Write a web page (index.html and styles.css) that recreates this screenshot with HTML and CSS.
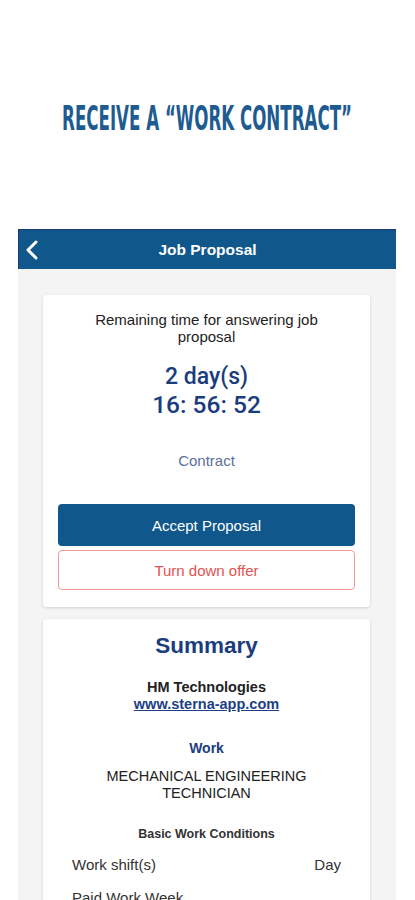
FILE: index.html
```html
<!DOCTYPE html>
<html lang="en">
<head>
    <meta charset="UTF-8">
    <meta name="viewport" content="width=device-width, initial-scale=1.0">
    <title>Job Proposal</title>
    <link rel="stylesheet" href="styles.css">
</head>
<body>
    <header class="promo">
        <h1 class="promo-title">RECEIVE A “WORK CONTRACT”</h1>
    </header>

    <div class="phone">
        <nav class="navbar">
            <svg class="back" width="14" height="20" viewBox="0 0 14 20">
                <path d="M11 2 L3 10 L11 18" fill="none" stroke="#fff" stroke-width="3" stroke-linecap="round" stroke-linejoin="round"/>
            </svg>
            <span class="nav-title">Job Proposal</span>
        </nav>

        <main class="content">
            <section class="card timer-card">
                <p class="timer-label">Remaining time for answering job proposal</p>
                <p class="timer-days">2 day(s)</p>
                <p class="timer-clock">16: 56: 52</p>
                <p class="contract-link">Contract</p>
                <button class="btn btn-accept">Accept Proposal</button>
                <button class="btn btn-decline">Turn down offer</button>
            </section>

            <section class="card summary-card">
                <h2 class="summary-title">Summary</h2>
                <p class="company">HM Technologies</p>
                <a class="company-url" href="#">www.sterna-app.com</a>
                <h3 class="section-label">Work</h3>
                <p class="job-title">MECHANICAL ENGINEERING TECHNICIAN</p>
                <h4 class="conditions-label">Basic Work Conditions</h4>
                <div class="row">
                    <span>Work shift(s)</span>
                    <span>Day</span>
                </div>
                <div class="row">
                    <span>Paid Work Week</span>
                    <span></span>
                </div>
            </section>
        </main>
    </div>
</body>
</html>
```

FILE: styles.css
```css
body {
    margin: 0;
    font-family: "Liberation Sans", Arial, sans-serif;
    background: #fff;
    color: #222;
    height: 900px;
    overflow: hidden;
}
p, h1, h2, h3, h4 {
    margin: 0;
}
.promo {
    height: 229px;
    display: flex;
    justify-content: center;
    padding-top: 99px;
    box-sizing: border-box;
}
.promo-title {
    font-family: "DejaVu Sans Condensed", "DejaVu Sans", sans-serif;
    font-weight: bold;
    font-size: 34px;
    line-height: 38px;
    color: #1d5b91;
    white-space: nowrap;
    transform: scaleX(0.545);
    height: 38px;
}
.phone {
    margin: 0 19px 0 18px;
    background: #f4f4f4;
    min-height: 700px;
}
.navbar {
    height: 40px;
    background: #10578c;
    border-top: 1px solid #1b3a75;
    border-left: 1px solid #1b3a75;
    box-sizing: border-box;
    display: flex;
    align-items: center;
    justify-content: center;
    position: relative;
}
.back {
    position: absolute;
    left: 6px;
    top: 10px;
}
.nav-title {
    color: #fff;
    font-weight: bold;
    font-size: 15.5px;
}
.content {
    padding: 26px 26px 0 25px;
    display: flex;
    flex-direction: column;
    gap: 12px;
}
.card {
    background: #fff;
    border-radius: 3px;
    box-shadow: 0 1px 3px rgba(0, 0, 0, 0.15);
    text-align: center;
}
.timer-card {
    padding: 16px 15px 17px;
    display: flex;
    flex-direction: column;
}
.timer-label {
    font-size: 15px;
    line-height: 17px;
    color: #222;
    padding: 0 25px;
}
.timer-days {
    font-family: Roboto, "Liberation Sans", sans-serif;
    font-weight: 500;
    font-size: 23px;
    line-height: 26px;
    color: #1b3d7e;
    margin-top: 19px;
}
.timer-clock {
    font-family: Roboto, "Liberation Sans", sans-serif;
    font-weight: 500;
    font-size: 24.5px;
    line-height: 30px;
    color: #1b3d7e;
}
.contract-link {
    font-size: 15px;
    line-height: 17px;
    color: #5d7099;
    margin-top: 32px;
}
.btn {
    font-family: "Liberation Sans", Arial, sans-serif;
    border-radius: 4px;
    width: 100%;
    cursor: pointer;
}
.btn-accept {
    margin-top: 35px;
    height: 42px;
    background: #10578c;
    color: #fff;
    border: none;
    font-size: 15px;
}
.btn-decline {
    margin-top: 4px;
    height: 40px;
    background: #fff;
    color: #e3524f;
    border: 1px solid #f29a98;
    font-size: 15px;
}
.summary-card {
    padding: 14px 29px 20px;
}
.summary-title {
    font-size: 22.5px;
    line-height: 26px;
    color: #1b3d7e;
}
.company {
    margin-top: 20px;
    font-weight: bold;
    font-size: 14.5px;
    line-height: 17px;
}
.company-url {
    display: block;
    font-weight: bold;
    font-size: 14.5px;
    line-height: 17px;
    color: #1d3f86;
}
.section-label {
    margin-top: 27px;
    font-size: 14px;
    line-height: 17px;
    color: #1b3d7e;
}
.job-title {
    margin-top: 11px;
    font-size: 14.5px;
    line-height: 17px;
    padding: 0 5px;
}
.conditions-label {
    margin-top: 25px;
    font-size: 12.5px;
    line-height: 15px;
    color: #333;
}
.row {
    display: flex;
    justify-content: space-between;
    font-size: 15px;
    line-height: 20px;
    color: #333;
    margin-top: 13px;
}
```
